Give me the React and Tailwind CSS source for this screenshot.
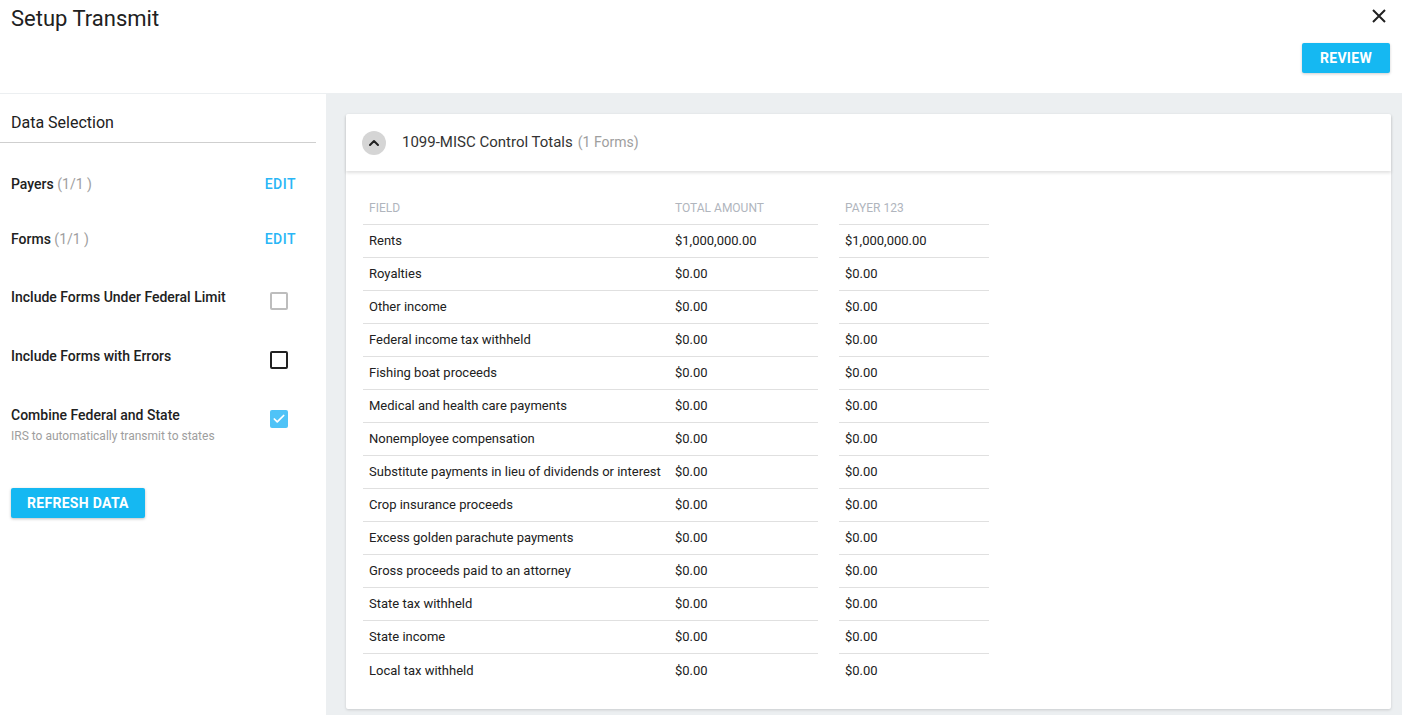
import { ChevronUp, Check } from 'lucide-react'

const ROWS = [
  ['Rents', '$1,000,000.00', '$1,000,000.00'],
  ['Royalties', '$0.00', '$0.00'],
  ['Other income', '$0.00', '$0.00'],
  ['Federal income tax withheld', '$0.00', '$0.00'],
  ['Fishing boat proceeds', '$0.00', '$0.00'],
  ['Medical and health care payments', '$0.00', '$0.00'],
  ['Nonemployee compensation', '$0.00', '$0.00'],
  ['Substitute payments in lieu of dividends or interest', '$0.00', '$0.00'],
  ['Crop insurance proceeds', '$0.00', '$0.00'],
  ['Excess golden parachute payments', '$0.00', '$0.00'],
  ['Gross proceeds paid to an attorney', '$0.00', '$0.00'],
  ['State tax withheld', '$0.00', '$0.00'],
  ['State income', '$0.00', '$0.00'],
  ['Local tax withheld', '$0.00', '$0.00'],
]

function Box({ variant }) {
  if (variant === 'checked') {
    return (
      <span className="w-[18px] h-[18px] rounded-[2px] bg-[#4fc3f7] flex items-center justify-center">
        <Check size={14} strokeWidth={3} className="text-white" />
      </span>
    )
  }
  const border = variant === 'dark' ? 'border-[#212121]' : 'border-[#bdbdbd]'
  return <span className={`block w-[18px] h-[18px] rounded-[2px] border-2 ${border}`} />
}

function CheckRow({ label, sub, variant }) {
  return (
    <div className="h-[59px] pt-[20px] pr-[28px] flex justify-between items-start">
      <div>
        <div className="text-[14px] leading-[20px] font-medium text-[#212121]">{label}</div>
        {sub && <div className="text-[12px] leading-[16px] mt-[3px] text-[#9e9e9e]">{sub}</div>}
      </div>
      <div className="mt-[5px]"><Box variant={variant} /></div>
    </div>
  )
}

export default function App() {
  const cell = 'h-[33px] flex items-center px-[6px] border-b border-[#e0e0e0]'
  return (
    <div className="w-[1402px] h-[715px] flex flex-col bg-white text-[#212121] overflow-hidden" style={{ fontFamily: 'Roboto, "Liberation Sans", sans-serif' }}>
      {/* header */}
      <div className="h-[93px] flex justify-between pl-[11px] pr-[12px]">
        <div className="text-[22px] leading-[30px] pt-[4px] text-[#212121]">Setup Transmit</div>
        <div className="flex flex-col items-end">
          <svg width="14" height="14" viewBox="0 0 14 14" className="mt-[9px] mr-[4px]">
            <path d="M1 1L13 13M13 1L1 13" stroke="#212121" strokeWidth="2" fill="none" />
          </svg>
          <button className="mt-[20px] h-[30px] w-[88px] rounded-[2px] bg-[#15b8f2] text-white text-[14px] font-bold tracking-[0.3px] shadow-[0_1px_3px_rgba(0,0,0,0.2)]">
            REVIEW
          </button>
        </div>
      </div>

      <div className="flex-1 flex border-t border-[#eceff1]">
        {/* sidebar */}
        <div className="w-[326px] bg-white pl-[11px] pr-[10px]">
          <div className="pt-[17px] pb-[7px] text-[16px] leading-[24px] text-[#212121] border-b border-[#cfcfcf] -ml-[11px] pl-[11px]">
            Data Selection
          </div>
          <div className="mt-[14px]">
            <div className="h-[55px] flex items-center justify-between pr-[20px]">
              <div className="text-[14px] font-medium">Payers <span className="font-normal text-[#9e9e9e]">(1/1 )</span></div>
              <span className="text-[14px] font-medium text-[#29b6f6] tracking-[0.5px]">EDIT</span>
            </div>
            <div className="h-[55px] flex items-center justify-between pr-[20px]">
              <div className="text-[14px] font-medium">Forms <span className="font-normal text-[#9e9e9e]">(1/1 )</span></div>
              <span className="text-[14px] font-medium text-[#29b6f6] tracking-[0.5px]">EDIT</span>
            </div>
            <CheckRow label="Include Forms Under Federal Limit" variant="light" />
            <CheckRow label="Include Forms with Errors" variant="dark" />
            <CheckRow label="Combine Federal and State" sub="IRS to automatically transmit to states" variant="checked" />
          </div>
          <button className="mt-[44px] h-[30px] px-[16px] rounded-[2px] bg-[#15b8f2] text-white text-[14px] font-bold tracking-[0.3px] shadow-[0_1px_3px_rgba(0,0,0,0.25)]">
            REFRESH DATA
          </button>
        </div>

        {/* main */}
        <div className="flex-1 bg-[#eceff1] pt-[20px] pl-[20px] pr-[11px]">
          <div className="bg-white rounded-[2px] shadow-[0_1px_3px_rgba(0,0,0,0.15)] h-[595px] flex flex-col">
            <div className="h-[57px] flex items-center pl-[16px] shadow-[0_2px_3px_rgba(0,0,0,0.12)]">
              <span className="w-[24px] h-[24px] rounded-full bg-[#d5d5d5] flex items-center justify-center">
                <ChevronUp size={16} strokeWidth={3} className="text-[#212121]" />
              </span>
              <span className="ml-[16px] text-[15px] text-[#333]">1099-MISC Control Totals</span>
              <span className="ml-[5px] text-[14px] text-[#9e9e9e]">(1 Forms)</span>
            </div>
            <div className="pl-[17px] pt-[21px]">
              <div className="grid grid-cols-[306px_149px_21px_150px] text-[13px] text-[#212121]">
                <div className={`${cell} h-[31px] text-[12px] text-[#b0b5bd]`}>FIELD</div>
                <div className={`${cell} h-[31px] text-[12px] text-[#b0b5bd]`}>TOTAL AMOUNT</div>
                <div />
                <div className={`${cell} h-[31px] text-[12px] text-[#b0b5bd]`}>PAYER 123</div>
                {ROWS.map(([f, t, p], i) => {
                  const c = i === ROWS.length - 1 ? 'h-[33px] flex items-center px-[6px]' : cell
                  return [
                    <div key={`f${i}`} className={c}>{f}</div>,
                    <div key={`t${i}`} className={c}>{t}</div>,
                    <div key={`s${i}`} />,
                    <div key={`p${i}`} className={c}>{p}</div>,
                  ]
                })}
              </div>
            </div>
          </div>
        </div>
      </div>
    </div>
  )
}
